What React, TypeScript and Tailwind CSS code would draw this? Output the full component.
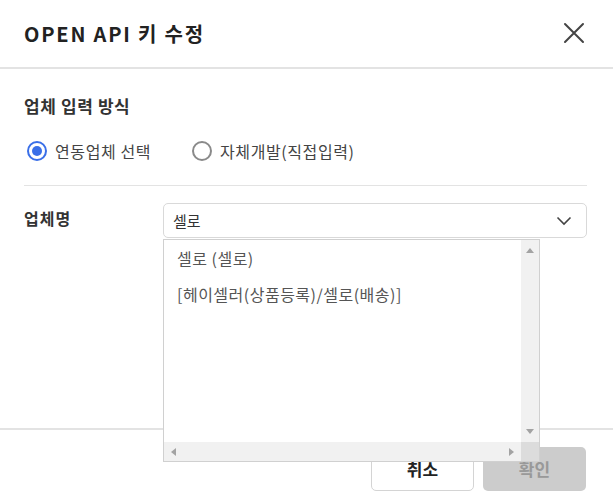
import React from "react";

function Radio({ checked, label, className = "" }: { checked: boolean; label: string; className?: string }) {
  return (
    <div className={"flex items-center gap-[8px] " + className}>
      {checked ? (
        <div className="w-[20px] h-[20px] rounded-full border-2 border-[#3a6fe8] flex items-center justify-center">
          <div className="w-[10px] h-[10px] rounded-full bg-[#3a6fe8]" />
        </div>
      ) : (
        <div className="w-[20px] h-[20px] rounded-full border-2 border-[#8a8a8a]" />
      )}
      <span className="text-[16px] tracking-[0.6px] text-[#444] leading-[24px]">{label}</span>
    </div>
  );
}

export default function App() {
  return (
    <div
      className="relative w-[613px] h-[501px] bg-white overflow-hidden flex flex-col text-[#333]"
      style={{ fontFamily: '"Noto Sans CJK KR", "Noto Sans", sans-serif' }}
    >
      <div className="h-[69px] shrink-0 flex items-center justify-between pl-[24px] pr-[28px] border-b-2 border-[#e3e3e3]">
        <h1 className="text-[20px] tracking-[1.8px] font-bold text-[#222] leading-[28px]">OPEN API 키 수정</h1>
        <svg width="22" height="22" viewBox="0 0 22 22" className="-mt-[2px]">
          <path d="M2 2 L20 20 M20 2 L2 20" stroke="#444" strokeWidth="2" strokeLinecap="round" />
        </svg>
      </div>

      <div className="flex-1 px-[24px] pr-[26px]">
        <h2 className="mt-[25px] text-[17px] tracking-[0.6px] font-semibold leading-[24px] text-[#333]">업체 입력 방식</h2>
        <div className="mt-[21px] flex items-center pl-[3px]">
          <Radio checked label="연동업체 선택" className="w-[165px]" />
          <Radio checked={false} label="자체개발(직접입력)" />
        </div>
        <div className="mt-[22px] border-t border-[#e3e3e3]" />
        <div className="mt-[17px] flex items-start">
          <div className="w-[139px] pt-[3px] text-[16px] tracking-[1px] font-semibold leading-[24px] text-[#333]">업체명</div>
          <div className="flex-1 h-[35px] border border-[#d9d9d9] rounded-[5px] flex items-center justify-between pl-[9px] pr-[14px]">
            <span className="text-[15px] text-[#333] leading-[20px]">셀로</span>
            <svg width="16" height="10" viewBox="0 0 16 10">
              <path d="M1.5 1.5 L8 8 L14.5 1.5" fill="none" stroke="#444" strokeWidth="1.6" />
            </svg>
          </div>
        </div>
      </div>

      <div className="h-[73px] shrink-0 border-t-2 border-[#e3e3e3] flex justify-end items-start gap-[9px] pt-[17px] pr-[27px]">
        <button className="w-[103px] h-[44px] border border-[#d4d4d4] rounded-[5px] bg-white text-[17px] font-semibold text-[#222]">
          취소
        </button>
        <button className="w-[103px] h-[44px] rounded-[5px] bg-[#cccccc] text-[17px] font-semibold text-[#999]">
          확인
        </button>
      </div>

      <div className="absolute left-[163px] top-[239px] w-[377px] h-[223px] bg-white border border-[#d0d0d0] grid grid-cols-[1fr_18px] grid-rows-[1fr_19px]">
        <div className="pl-[13px] pt-[6px] text-[16px] tracking-[0.5px] text-[#555] leading-[24px]">
          <div className="h-[24px]">셀로 (셀로)</div>
          <div className="mt-[12px] h-[24px]">[헤이셀러(상품등록)/셀로(배송)]</div>
        </div>
        <div className="bg-[#f1f1f1] flex flex-col items-center justify-between py-[8px]">
          <svg width="8" height="5" viewBox="0 0 8 5"><path d="M4 0 L8 5 L0 5Z" fill="#a3a3a3" /></svg>
          <svg width="8" height="5" viewBox="0 0 8 5"><path d="M0 0 L8 0 L4 5Z" fill="#a3a3a3" /></svg>
        </div>
        <div className="bg-[#f1f1f1] flex items-center justify-between px-[7px]">
          <svg width="5" height="8" viewBox="0 0 5 8"><path d="M5 0 L5 8 L0 4Z" fill="#a3a3a3" /></svg>
          <svg width="5" height="8" viewBox="0 0 5 8"><path d="M0 0 L0 8 L5 4Z" fill="#a3a3a3" /></svg>
        </div>
        <div className="bg-[#dcdcdc]" />
      </div>
    </div>
  );
}
